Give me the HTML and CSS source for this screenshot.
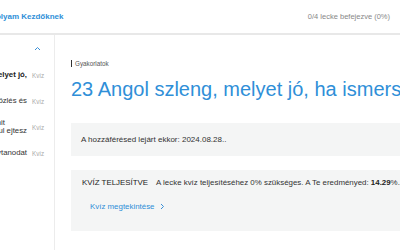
FILE: index.html
```html
<!DOCTYPE html>
<html lang="hu">
<head>
<meta charset="utf-8">
<link rel="stylesheet" href="styles.css">
</head>
<body>
<header class="topbar">
  <div class="course">Angol Nyelvtanfolyam Kezdőknek</div>
  <div class="progress">0/4 lecke befejezve (0%)</div>
</header>
<div class="layout">
  <aside class="sidebar">
    <div class="side-inner">
      <div class="side-head">
        <svg class="chev" width="7" height="5" viewBox="0 0 7 5"><path d="M1 4 L3.5 1.5 L6 4" fill="none" stroke="#3a8fd6" stroke-width="1"/></svg>
      </div>
      <ul class="lessons">
        <li class="lesson active"><span class="ltitle">23 Angol szleng, melyet jó,</span><span class="ltype">Kvíz</span></li>
        <li class="lesson"><span class="ltitle">Társalgás, üdvözlés és</span><span class="ltype">Kvíz</span></li>
        <li class="lesson"><span class="ltitle"><span class="short">Amit</span><br>ha rosszul ejtesz</span><span class="ltype">Kvíz</span></li>
        <li class="lesson"><span class="ltitle">Fejleszd a nyelvtanodat</span><span class="ltype">Kvíz</span></li>
      </ul>
    </div>
  </aside>
  <main class="main">
    <div class="crumb">Gyakorlatok</div>
    <h1 class="title">23 Angol szleng, melyet jó, ha ismersz</h1>
    <div class="box notice">A hozzáférésed lejárt ekkor: 2024.08.28..</div>
    <div class="box quiz">
      <p class="quiz-line"><span class="status">KVÍZ TELJESÍTVE</span>A lecke kvíz teljesítéséhez 0% szükséges. A Te eredményed: <b>14.29</b>%.</p>
      <a class="quiz-link" href="#">Kvíz megtekintése <svg width="6" height="7" viewBox="0 0 6 7"><path d="M2 1 L4.5 3.5 L2 6" fill="none" stroke="#3a8fd6" stroke-width="1"/></svg></a>
    </div>
  </main>
</div>
</body>
</html>
```
FILE: styles.css
```css
* { box-sizing: border-box; }
html, body { margin: 0; padding: 0; }
body {
  width: 400px;
  height: 250px;
  overflow: hidden;
  font-family: "Liberation Sans", Arial, sans-serif;
  color: #222;
  background: #fff;
}
.topbar {
  height: 35px;
  border-bottom: 2px solid #e8e8e8;
  display: flex;
  align-items: center;
  justify-content: space-between;
  padding-right: 10px;
  overflow: hidden;
}
.course {
  margin-left: -65px;
  font-size: 8px;
  font-weight: bold;
  color: #2f8fd8;
  white-space: nowrap;
}
.progress {
  font-size: 7.5px;
  color: #888;
}
.layout {
  display: flex;
  height: 215px;
}
.sidebar {
  width: 55px;
  flex: none;
  border-right: 1px solid #ececec;
  overflow: hidden;
}
.side-inner {
  width: 160px;
  margin-left: -106px;
}
.side-head {
  height: 27px;
  display: flex;
  justify-content: flex-end;
  align-items: center;
  padding-right: 13px;
}
.lessons {
  list-style: none;
  margin: 0;
  padding: 0;
}
.lesson {
  display: flex;
  align-items: center;
  height: 26px;
}
.ltitle {
  flex: 1;
  min-width: 0;
  font-size: 7.8px;
  line-height: 8.4px;
  color: #333;
  text-align: right;
  padding-right: 5px;
  white-space: nowrap;
}
.ltitle .short { padding-right: 22px; }
.lesson.active .ltitle { font-weight: bold; color: #222; }
.ltype {
  width: 22px;
  flex: none;
  font-size: 6.3px;
  color: #aaa;
}
.main {
  flex: 1;
  padding: 25px 0 0 16px;
  overflow: hidden;
  white-space: nowrap;
}
.crumb {
  font-size: 6.3px;
  color: #555;
  border-left: 1px solid #333;
  padding-left: 3px;
  line-height: 7px;
}
.title {
  margin: 9px 0 0 0;
  font-size: 20px;
  font-weight: normal;
  color: #2f8fd8;
  line-height: 26px;
}
.box {
  background: #f4f5f5;
  width: 340px;
}
.notice {
  margin-top: 21px;
  height: 33px;
  padding: 0 10px;
  display: flex;
  align-items: center;
  font-size: 8px;
  color: #333;
}
.quiz {
  margin-top: 14px;
  height: 61px;
  padding: 8px 11px 0;
}
.quiz-line {
  margin: 0;
  font-size: 7.9px;
  line-height: 9px;
  color: #333;
}
.status { margin-right: 8px; color: #222; }
.quiz-line b { color: #222; }
.quiz-link {
  display: inline-block;
  margin: 15px 0 0 8px;
  font-size: 7.9px;
  line-height: 9px;
  color: #2f8fd8;
  text-decoration: none;
}
.quiz-link svg { vertical-align: -1px; margin-left: 2px; }
```
